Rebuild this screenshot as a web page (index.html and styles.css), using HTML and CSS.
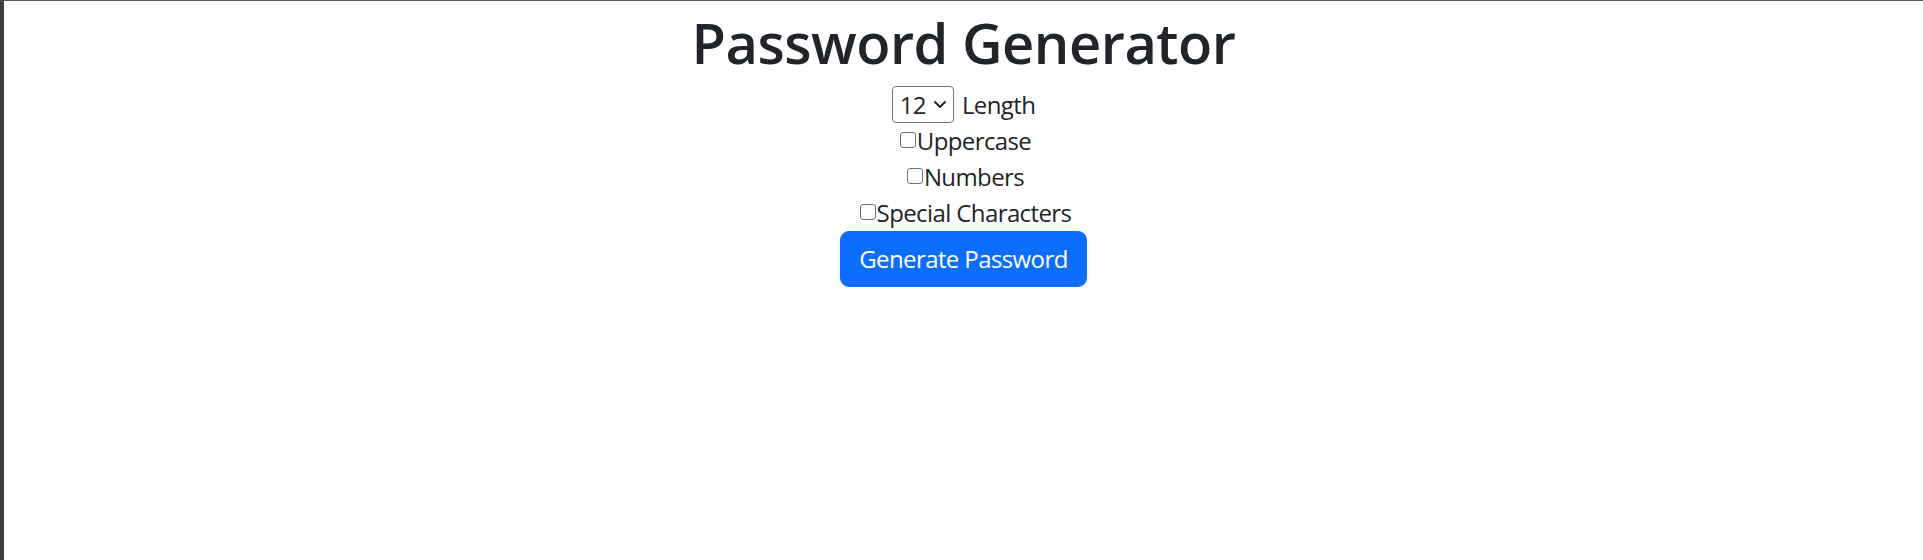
FILE: index.html
```html
<!DOCTYPE html>
<html lang="en">
<head>
<meta charset="utf-8">
<title>Password Generator</title>
<link rel="stylesheet" href="styles.css">
</head>
<body>
<div class="frame">
  <main class="app">
    <h1 class="title">Password Generator</h1>
    <div class="row">
      <span class="select">12<svg class="chev" viewBox="0 0 14 9" width="14" height="9"><path d="M2 2 L7 7 L12 2" fill="none" stroke="#212529" stroke-width="2" stroke-linecap="round" stroke-linejoin="round"/></svg></span>
      <label class="label">Length</label>
    </div>
    <div class="row"><span class="check"></span><label class="label">Uppercase</label></div>
    <div class="row"><span class="check"></span><label class="label">Numbers</label></div>
    <div class="row"><span class="check"></span><label class="label">Special Characters</label></div>
    <button class="btn">Generate Password</button>
  </main>
</div>
</body>
</html>
```
FILE: styles.css
```css
html, body {
  margin: 0;
  padding: 0;
  height: 100%;
  background: #ffffff;
}
.frame {
  box-sizing: border-box;
  height: 100%;
  border-left: 4px solid #3b3d40;
  border-top: 1px solid #5c5c5c;
  font-family: "Open Sans", "Noto Sans", sans-serif;
  color: #212529;
}
.app {
  text-align: center;
  font-size: 24px;
  line-height: 36px;
  letter-spacing: -0.6px;
}
.title {
  margin: 0 0 8px 0;
  padding-top: 5px;
  font-size: 56px;
  line-height: 72px;
  font-weight: 600;
  letter-spacing: -0.5px;
}
.row {
  display: flex;
  justify-content: center;
  align-items: center;
}
.select {
  display: inline-flex;
  align-items: center;
  gap: 7px;
  height: 37px;
  box-sizing: border-box;
  padding: 0 6px 0 7px;
  border: 1px solid #767676;
  border-radius: 4px;
  margin-right: 8px;
  font-size: 24px;
}
.check {
  display: inline-block;
  width: 16px;
  height: 16px;
  box-sizing: border-box;
  border: 1px solid #6f6f6f;
  border-radius: 3px;
  margin: 0 1px 2px 4px;
}
.btn {
  margin-top: 0;
  font-family: inherit;
  font-size: 24px;
  line-height: 36px;
  letter-spacing: -0.6px;
  color: #ffffff;
  background: #0d6efd;
  border: 1px solid #0d6efd;
  border-radius: 9px;
  padding: 9px 18px;
}
```
